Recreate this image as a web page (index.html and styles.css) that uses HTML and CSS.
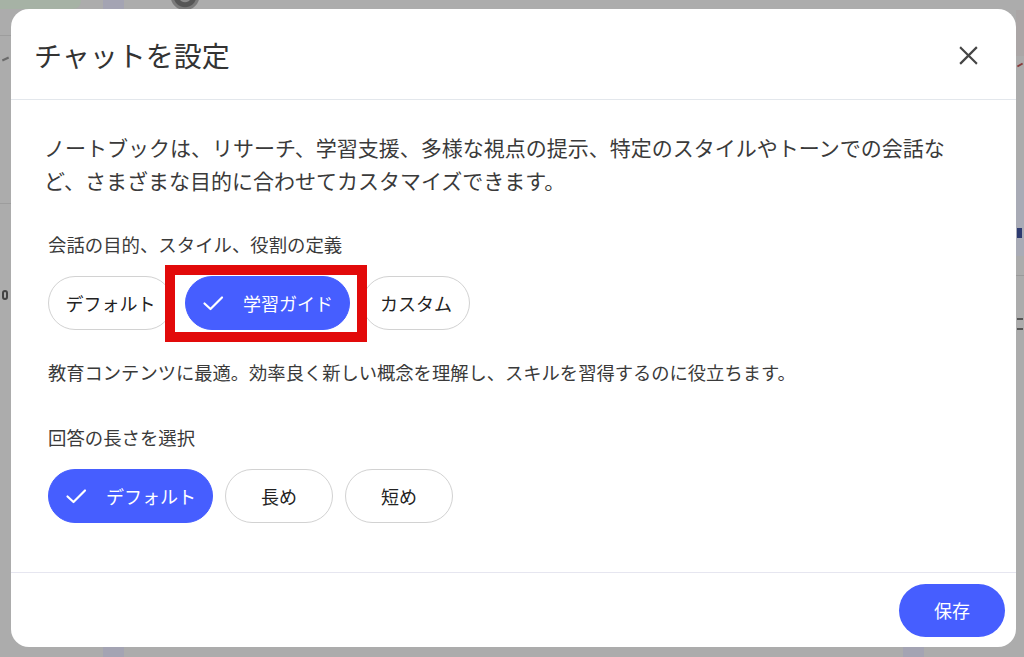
FILE: index.html
```html
<!DOCTYPE html>
<html lang="ja">
<head>
<meta charset="utf-8">
<title>チャットを設定</title>
<link rel="stylesheet" href="styles.css">
</head>
<body>
<div class="backdrop" aria-hidden="true">
  <div class="bg-green"></div>
  <div class="bg-tab"></div>
  <div class="bg-gear"></div>
  <div class="bg-tab bg-tab-bottom"></div>
  <div class="bg-tab bg-tab-bottom2"></div>
  <div class="bg-left-line l1"></div>
  <div class="bg-left-line l2"></div>
  <div class="bg-right-band rb1"></div>
  <div class="bg-right-band rb2"></div>
  <div class="bg-right-band rb3"></div>
  <div class="bg-mark m1"></div>
  <div class="bg-mark m2"></div>
  <div class="bg-mark m3"></div>
  <div class="bg-mark m4"></div>
  <div class="bg-mark m5"></div>
</div>

<div class="dialog" role="dialog">
  <header class="dialog-header">
    <h1 class="dialog-title">チャットを設定</h1>
    <button class="close-btn" aria-label="閉じる">
      <svg width="19" height="19" viewBox="0 0 20 20"><path d="M2 2 L18 18 M18 2 L2 18" stroke="#454545" stroke-width="2.3" stroke-linecap="square" fill="none"/></svg>
    </button>
  </header>

  <main class="dialog-body">
    <p class="intro">ノートブックは、リサーチ、学習支援、多様な視点の提示、特定のスタイルやトーンでの会話など、さまざまな目的に合わせてカスタマイズできます。</p>

    <div class="section">
      <div class="label label-first">会話の目的、スタイル、役割の定義</div>
      <div class="chips">
        <button class="chip">デフォルト</button>
        <button class="chip chip-selected">
          <svg class="check" width="24" height="24" viewBox="0 0 24 24"><path d="M3.5 12.5 L9.5 18 L21 6.5" stroke="#fff" stroke-width="2.2" fill="none" stroke-linecap="round" stroke-linejoin="round"/></svg>
          <span>学習ガイド</span>
        </button>
        <button class="chip">カスタム</button>
        <div class="highlight-box"></div>
      </div>
      <div class="desc">教育コンテンツに最適。効率良く新しい概念を理解し、スキルを習得するのに役立ちます。</div>
    </div>

    <div class="section">
      <div class="label label-second">回答の長さを選択</div>
      <div class="chips">
        <button class="chip chip-selected">
          <svg class="check" width="24" height="24" viewBox="0 0 24 24"><path d="M3.5 12.5 L9.5 18 L21 6.5" stroke="#fff" stroke-width="2.2" fill="none" stroke-linecap="round" stroke-linejoin="round"/></svg>
          <span>デフォルト</span>
        </button>
        <button class="chip">長め</button>
        <button class="chip">短め</button>
      </div>
    </div>
  </main>

  <footer class="dialog-footer">
    <button class="save-btn">保存</button>
  </footer>
</div>
</body>
</html>
```

FILE: styles.css
```css
* { box-sizing: border-box; }

html, body {
  margin: 0;
  height: 657px;
  overflow: hidden;
}

body {
  background: #acacac;
  font-family: "Noto Sans CJK JP", "Noto Sans", sans-serif;
  color: #3a3a3a;
  padding: 9px 8px 10px 11px;
  position: relative;
}

/* ---------- backdrop (content behind the modal scrim) ---------- */
.backdrop {
  position: absolute;
  inset: 0;
  z-index: 0;
}
.bg-green {
  position: absolute;
  left: 0; top: 0;
  width: 81px; height: 9px;
  background: #a6b2a5;
  border-bottom-right-radius: 8px;
}
.bg-tab {
  position: absolute;
  left: 103px; top: 0;
  width: 21px; height: 9px;
  background: #a4a4b3;
}
.bg-tab-bottom { top: 647px; height: 10px; }
.bg-tab-bottom2 { left: 903px; top: 647px; height: 10px; }
.bg-gear {
  position: absolute;
  left: 160px; top: -16px;
  width: 50px; height: 26px;
  border-radius: 50%;
  background: radial-gradient(circle at 50% 45%, #8a8a8a 0 6px, #555 7px 11px, #7a7a7a 12px 14px, transparent 15px);
}
.bg-left-line {
  position: absolute;
  left: 0; width: 11px; height: 1px;
  background: #9d9d9d;
}
.l1 { top: 35px; }
.l2 { top: 203px; }
.bg-right-band {
  position: absolute;
  left: 1016px; width: 8px;
}
.rb1 { top: 10px; height: 46px; background: #aba6a6; }
.rb2 { top: 180px; height: 76px; background: #a9abb6; }
.rb3 { top: 275px; height: 1px; background: #9a9a9a; }
.bg-mark {
  position: absolute;
  height: 2px;
}
.m1 { left: 2px; top: 58px; width: 7px; background: #6a6a6a; transform: rotate(-25deg); }
.m2 { left: 2px; top: 290px; width: 6px; height: 10px; border: 2px solid #444; border-radius: 3px; background: transparent; }
.m3 { left: 1017px; top: 64px; width: 6px; background: #8a3a3a; transform: rotate(-30deg); }
.m4 { left: 1017px; top: 228px; width: 5px; height: 10px; background: #2d3a70; }
.m5 { left: 1017px; top: 318px; width: 6px; height: 12px; border-top: 2px solid #555; border-bottom: 2px solid #555; background: transparent; }

/* ---------- dialog ---------- */
.dialog {
  position: relative;
  z-index: 1;
  height: 638px;
  background: #ffffff;
  border-radius: 18px;
  display: flex;
  flex-direction: column;
  overflow: hidden;
}

.dialog-header {
  height: 91px;
  flex: none;
  display: flex;
  align-items: center;
  justify-content: space-between;
  padding: 0 28px 0 23px;
  border-bottom: 1px solid #e3e7ec;
}
.dialog-title {
  margin: 0;
  font-size: 28px;
  font-weight: 400;
  color: #333;
  line-height: 1;
  padding-top: 1px;
}
.close-btn {
  width: 40px;
  height: 40px;
  border: none;
  background: transparent;
  padding: 0;
  display: flex;
  align-items: center;
  justify-content: center;
  margin-top: 2px;
}

.dialog-body {
  flex: 1;
  padding: 31px 33px 0 33px;
}

.intro {
  margin: 0;
  font-size: 21px;
  line-height: 33px;
  color: #3a3a3a;
}

.section {
  padding-left: 4px;
}

.label {
  font-size: 18.4px;
  line-height: 26px;
  color: #3a3a3a;
}
.label-first { margin-top: 34px; }
.label-second { margin-top: 39px; }

.chips {
  display: flex;
  gap: 12px;
  margin-top: 19px;
  position: relative;
}

.chip {
  height: 54px;
  min-width: 108px;
  padding: 0 16.5px;
  border: 1px solid #d2d2d2;
  border-radius: 27px;
  background: #ffffff;
  font-family: "Noto Sans CJK JP", "Noto Sans", sans-serif;
  font-size: 18px;
  color: #222;
  display: flex;
  align-items: center;
  justify-content: center;
}

.chip-selected {
  background: #465eff;
  border-color: #465eff;
  color: #ffffff;
  padding: 0 16px 0 15px;
  gap: 18px;
}
.chip-selected .check { flex: none; }

.highlight-box {
  position: absolute;
  left: 117px;
  top: -11px;
  width: 202px;
  height: 77px;
  border: 10px solid #e20a0a;
  pointer-events: none;
}

.desc {
  margin-top: 29px;
  font-size: 18.3px;
  line-height: 26px;
  color: #3a3a3a;
}

.dialog-footer {
  height: 75px;
  flex: none;
  border-top: 1px solid #e6e6f0;
  display: flex;
  align-items: center;
  justify-content: flex-end;
  padding: 0 11px 0 0;
}

.save-btn {
  width: 106px;
  height: 53px;
  border: none;
  border-radius: 27px;
  background: #465eff;
  color: #fff;
  font-family: "Noto Sans CJK JP", "Noto Sans", sans-serif;
  font-size: 18px;
}
```
